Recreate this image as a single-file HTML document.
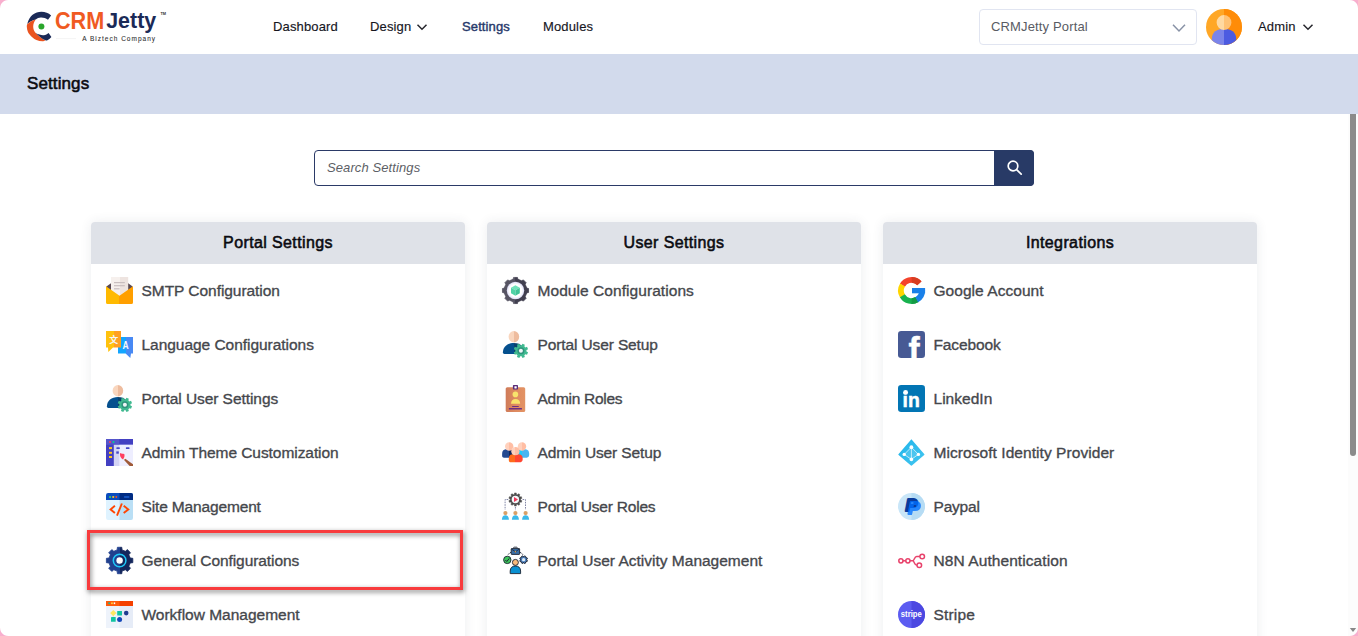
<!DOCTYPE html>
<html lang="en">
<head>
<meta charset="utf-8">
<title>Settings - CRMJetty Portal</title>
<style>
*{box-sizing:border-box;margin:0;padding:0}
html,body{width:1358px;height:636px;overflow:hidden;background:#fff}
body{position:relative;font-family:"Liberation Sans",sans-serif;color:#111;-webkit-font-smoothing:antialiased}
.abs{position:absolute}
/* window corners */
.corner{position:absolute;width:8px;height:8px;z-index:50}
/* header */
#hdr{position:absolute;left:0;top:0;width:1358px;height:54px;background:#fff}
.nav{position:absolute;top:19px;font-size:13px;line-height:16px;color:#16161e;white-space:nowrap;letter-spacing:.15px;-webkit-text-stroke:.15px #16161e}
.nav.act{color:#27396b;-webkit-text-stroke:.4px #27396b;letter-spacing:.12px}
#sel{position:absolute;left:979px;top:9px;width:218px;height:36px;border:1px solid #e1e5f1;border-radius:4px;background:#fff}
#sel span{position:absolute;left:11px;top:9px;font-size:13px;line-height:16px;color:#595b63;letter-spacing:.15px;white-space:nowrap}
#titlebar{position:absolute;left:0;top:54px;width:1358px;height:60px;background:#d2daec}
#titlebar h1{position:absolute;left:27px;top:19.5px;font-size:17px;line-height:20px;font-weight:400;color:#0b0b10;-webkit-text-stroke:.55px #0b0b10;letter-spacing:.1px}
/* search */
#search{position:absolute;left:314px;top:150px;width:720px;height:36px;border:1px solid #2b3a67;border-radius:4px;background:#fff}
#search span{position:absolute;left:12px;top:9px;font-size:13px;line-height:16px;font-style:italic;color:#5d5f66;letter-spacing:.1px}
#sbtn{position:absolute;right:-1px;top:-1px;width:40px;height:36px;background:#283a66;border-radius:0 4px 4px 0}
/* cards */
.card{position:absolute;top:222px;width:374px;height:440px;background:#fff;border-radius:4px;box-shadow:0 0 12px rgba(40,50,80,.09)}
.card h2{position:absolute;left:0;top:0;width:374px;height:42px;background:#dfe2e8;border-radius:4px 4px 0 0;text-align:center;font-size:16px;line-height:41px;font-weight:400;color:#0b0b10;-webkit-text-stroke:.55px #0b0b10;letter-spacing:.38px}
.it{position:absolute;left:50.5px;font-size:15.5px;line-height:20px;color:#45474c;-webkit-text-stroke:.34px #45474c;white-space:nowrap;letter-spacing:.22px}
.ic{position:absolute;left:15px;width:27px;height:27px}
.ic svg{display:block;width:27px;height:27px;overflow:visible}
#hl{position:absolute;left:87px;top:530px;width:376px;height:60px;border:3px solid #f83b3d;filter:drop-shadow(1.2px 2.2px 2.8px rgba(0,0,0,.55));z-index:20}
/* scrollbar */
#track{position:absolute;left:1348px;top:114px;width:10px;height:522px;background:#fcfcfc}
#thumb{position:absolute;left:1350px;top:114px;width:6px;height:342px;background:#8b8b8b;border-radius:0 0 3px 3px}
</style>
</head>
<body>

<div id="hdr">
  <svg class="abs" style="left:0;top:0" width="180" height="54" viewBox="0 0 180 54">
<path d="M27.2,23.9 C28.6,19.4 30.4,16.6 32.6,14.8 C35.2,12.7 38.2,11.8 41.4,11.8 C45.2,11.8 48.6,13.2 51.1,15.4 L48,19.8 C45.8,18.2 43.4,17.5 40.8,17.6 C38.8,17.7 37.2,18.4 35.7,19.5 C32.4,20.4 29.6,21.9 27.2,23.9 Z" fill="#1b2a57"/>
<path d="M35.7,19.5 C32.6,20.4 29.6,22 27.2,24.2 C26.7,25.4 26.8,26.4 26.9,27.4 C27.1,30 28,32.4 29.4,34.3 C31.2,36.8 33.6,38.8 36.4,40 C38.6,40.9 41,41.3 43.3,41.2 C44.2,41.1 45,40.8 45.5,40.3 C43.6,39.6 42.2,38.6 40.75,37.4 C39,36 37.2,34.6 35.7,33 C34,31 33.2,28.9 33.2,26.8 C33.2,24.2 34,21.6 35.7,19.5 Z" fill="#ea5420"/>
<path d="M35.7,33 C37,33.8 38.2,34.3 39.5,34.6 C41,35.1 42.5,35.4 43.9,35.2 C45.6,35 47.2,34.2 48.6,33 L51.4,37.1 C50.2,38.6 48.7,39.8 47,40.5 C46.4,40.7 45.9,40.5 45.5,40.3 C43.8,39.6 42.2,38.6 40.75,37.4 C38.9,36 37.2,34.6 35.7,33 Z" fill="#1b2a57"/>
<circle cx="41.4" cy="26.4" r="3" fill="#2aa62c"/>
<text x="55" y="28.6" font-family="'Liberation Sans',sans-serif" font-weight="700" font-size="23.6" fill="#f05a22" textLength="49.2" lengthAdjust="spacingAndGlyphs">CRM</text>
<text x="106.2" y="28" font-family="'Liberation Sans',sans-serif" font-weight="700" font-size="22.6" fill="#1b2a57" textLength="50" lengthAdjust="spacingAndGlyphs">Jetty</text>
<text x="160.4" y="15.4" font-family="'Liberation Sans',sans-serif" font-weight="700" font-size="3.6" fill="#333" textLength="5.6" lengthAdjust="spacingAndGlyphs">TM</text>
<line x1="56" y1="38.6" x2="76" y2="38.6" stroke="#ececec" stroke-width=".6"/>
<text x="82.2" y="40.6" font-family="'Liberation Sans',sans-serif" font-weight="400" font-size="6.5" fill="#303030" stroke="#303030" stroke-width=".08" textLength="72.8" lengthAdjust="spacing">A Biztech Company</text>
</svg>
  <div class="nav" style="left:273px">Dashboard</div>
  <div class="nav" style="left:370px">Design</div>
  <svg class="abs" style="left:416px;top:23px" width="12" height="8" viewBox="0 0 12 8"><polyline points="1.5,1.8 6,6.2 10.5,1.8" fill="none" stroke="#26262c" stroke-width="1.5"/></svg>
  <div class="nav act" style="left:462px">Settings</div>
  <div class="nav" style="left:543px">Modules</div>
  <div id="sel"><span>CRMJetty Portal</span>
    <svg class="abs" style="left:191px;top:13px" width="16" height="10" viewBox="0 0 16 10"><polyline points="2,1.8 8,8 14,1.8" fill="none" stroke="#8892a6" stroke-width="1.5"/></svg>
  </div>
  <svg class="abs" style="left:1206px;top:9px" width="36" height="36" viewBox="0 0 36 36"><defs><clipPath id="cAv"><circle cx="18" cy="18" r="18"/></clipPath></defs>
<g clip-path="url(#cAv)"><rect width="36" height="36" fill="#ffa726"/><rect x="18" width="18" height="36" fill="#ff8c08"/>
<path d="M5.8,30 C5.8,23 11,19.7 18,19.7 V37 H5.8 Z" fill="#7b84e9"/><path d="M30.2,30 C30.2,23 25,19.7 18,19.7 V37 H30.2 Z" fill="#4c5be1"/>
<path d="M18,6.1 A7.4,7.4 0 0 0 18,20.9 Z" fill="#ffd9a1"/><path d="M18,6.1 A7.4,7.4 0 0 1 18,20.9 Z" fill="#ffc275"/></g></svg>
  <div class="nav" style="left:1258px">Admin</div>
  <svg class="abs" style="left:1302px;top:23px" width="12" height="8" viewBox="0 0 12 8"><polyline points="1.5,1.8 6,6.2 10.5,1.8" fill="none" stroke="#26262c" stroke-width="1.5"/></svg>
</div>

<div id="titlebar"><h1>Settings</h1></div>

<div id="search"><span>Search Settings</span>
  <div id="sbtn">
    <svg class="abs" style="left:12.2px;top:9.3px" width="17" height="17" viewBox="0 0 17 17"><circle cx="7" cy="7" r="4.8" fill="none" stroke="#fff" stroke-width="1.7"/><line x1="10.6" y1="10.6" x2="15.2" y2="15.2" stroke="#fff" stroke-width="1.7" stroke-linecap="round"/></svg>
  </div>
</div>

<div class="card" style="left:91px">
  <h2>Portal Settings</h2>
  <div class="ic" style="top:55px"><svg viewBox="0 0 27 27"><defs><linearGradient id="gS1"><stop offset=".5" stop-color="#ffba00"/><stop offset=".5" stop-color="#ff9f00"/></linearGradient><linearGradient id="gS2"><stop offset=".5" stop-color="#f6f0ed"/><stop offset=".5" stop-color="#eee4e0"/></linearGradient></defs><polygon points="0.4,9.6 5,6.3 22.2,6.3 26.6,9.6 26.6,14 0.4,14" fill="#5b4a52"/><rect x="5" y="0" width="17.2" height="20" fill="url(#gS2)"/><rect x="8" y="5" width="10.8" height="1.2" fill="#c9bebf"/><rect x="8" y="8.1" width="10.8" height="1.2" fill="#c9bebf"/><rect x="8" y="11.2" width="5.6" height="1.2" fill="#c9bebf"/><path d="M0,9.2 L13.5,18.8 L27,9.2 V25.4 Q27,27 25.4,27 H1.6 Q0,27 0,25.4 Z" fill="url(#gS1)"/></svg></div><div class="it" style="top:59px;letter-spacing:-0.049px">SMTP Configuration</div>
  <div class="ic" style="top:109px"><svg viewBox="0 0 27 27"><defs><linearGradient id="gL1" gradientUnits="userSpaceOnUse" x1="0" x2="15"><stop offset=".52" stop-color="#ffc20d"/><stop offset=".52" stop-color="#ff9f22"/></linearGradient><linearGradient id="gL2" gradientUnits="userSpaceOnUse" x1="12" x2="27"><stop offset=".5" stop-color="#12a5ff"/><stop offset=".5" stop-color="#4889f4"/></linearGradient></defs><path d="M12,6 H27 V22.6 H25 L24.3,27 L19.6,22.6 H12 Z" fill="url(#gL2)"/><path d="M0,0 H15 V16.6 H7 L2.3,21 L2,16.6 H0 Z" fill="url(#gL1)"/><text x="7.8" y="12.3" font-family="'Liberation Sans','Noto Sans CJK SC',sans-serif" font-size="9" font-weight="700" text-anchor="middle" fill="#f3f6fb">文</text><text x="0" y="17.9" font-family="'Liberation Sans',sans-serif" font-size="10.7" font-weight="700" text-anchor="middle" fill="#f3f6fb" transform="translate(19.7 0) scale(.8 1)">A</text></svg></div><div class="it" style="top:113px;letter-spacing:-0.036px">Language Configurations</div>
  <div class="ic" style="top:163px"><svg viewBox="0 0 27 27"><defs><linearGradient id="gP1a" gradientUnits="userSpaceOnUse" x1="6.6" x2="17.2"><stop offset=".5" stop-color="#f9d6be"/><stop offset=".5" stop-color="#eebc9e"/></linearGradient><linearGradient id="gP2a" gradientUnits="userSpaceOnUse" x1="0" x2="23.8"><stop offset=".5" stop-color="#05508e"/><stop offset=".5" stop-color="#0a416d"/></linearGradient></defs><ellipse cx="11.9" cy="5.7" rx="5.3" ry="5.7" fill="url(#gP1a)"/><path d="M0.9,21.6 C0.9,15.6 5.6,12 11.9,12 C15.6,12 18.6,13.2 20.4,15.4 V23 H2.3 Q0.9,23 0.9,21.6 Z" fill="url(#gP2a)"/><path d="M24.45,20.55 L26.04,21.34 L25.03,23.76 L23.35,23.20 L22.30,24.25 L22.86,25.93 L20.44,26.94 L19.65,25.35 L18.15,25.35 L17.36,26.94 L14.94,25.93 L15.50,24.25 L14.45,23.20 L12.77,23.76 L11.76,21.34 L13.35,20.55 L13.35,19.05 L11.76,18.26 L12.77,15.84 L14.45,16.40 L15.50,15.35 L14.94,13.67 L17.36,12.66 L18.15,14.25 L19.65,14.25 L20.44,12.66 L22.86,13.67 L22.30,15.35 L23.35,16.40 L25.03,15.84 L26.04,18.26 L24.45,19.05Z" fill="#40b990"/><circle cx="18.9" cy="19.8" r="3.5" fill="#2f937c"/><circle cx="18.9" cy="19.8" r="2" fill="#eef4f6"/></svg></div><div class="it" style="top:167px;letter-spacing:-0.059px">Portal User Settings</div>
  <div class="ic" style="top:217px"><svg viewBox="0 0 27 27"><rect x="0" y="0" width="27" height="27" fill="#4340c2"/><rect x="0" y="0" width="13.3" height="5.8" fill="#5555ca"/><rect x="7.8" y="5.8" width="19.2" height="21.2" fill="#d4d4f4"/><rect x="13.3" y="5.8" width="13.7" height="21.2" fill="#eeeeff"/><circle cx="4" cy="3" r="1" fill="#ff3c5e"/><circle cx="7.5" cy="3" r="1" fill="#00d890"/><rect x="3" y="8.1" width="3" height="2" fill="#ffc81e"/><rect x="3" y="12.8" width="3" height="2" fill="#ffc81e"/><rect x="3" y="17" width="3" height="2" fill="#ffc81e"/><rect x="10.4" y="8.3" width="3.4" height="1.6" rx=".5" fill="#4848c6"/><rect x="19.9" y="8.3" width="3.6" height="1.6" rx=".5" fill="#4848c6"/><rect x="10.3" y="12.4" width="2.5" height="2.3" fill="#4848c6"/><path d="M18.6,19.2 L27,25.2 V27 H23.6 L17.6,20.6 Z" fill="#9f5a38"/><path d="M14.1,14 C15.8,15.2 17.2,14.4 18.4,15.2 C19.2,17 18.6,18.8 17,20.5 C14.6,19 13.5,16.6 14.1,14 Z" fill="#ff3f62"/><path d="M18.4,15.2 L20.4,18.6 L18.2,20.8 L17,20.4 C18.6,18.8 19.2,17 18.4,15.2Z" fill="#f6f2f2"/></svg></div><div class="it" style="top:221px;letter-spacing:-0.064px">Admin Theme Customization</div>
  <div class="ic" style="top:271px"><svg viewBox="0 0 27 27"><defs><clipPath id="cSi"><rect width="27" height="27" rx="2.2"/></clipPath></defs><g clip-path="url(#cSi)"><rect width="27" height="27" fill="#dff3ff"/><rect x="13.5" width="13.5" height="27" fill="#badff5"/><rect width="27" height="7" fill="#0a4cbe"/><rect x="13.5" width="13.5" height="7" fill="#002b82"/></g><rect x="3.1" y="3" width="1.9" height="2" rx=".4" fill="#3ec860"/><rect x="6.3" y="3" width="1.9" height="2" rx=".4" fill="#e9b72f"/><rect x="9.5" y="3" width="1.6" height="2" rx=".4" fill="#ea5129"/><rect x="17.8" y="3.2" width="5.7" height="1.6" rx=".8" fill="#1b60d2"/><g fill="none" stroke="#ff4603" stroke-width="1.9"><polyline points="8.9,12.8 4.6,16.4 8.9,20"/><polyline points="17.7,12.8 22.3,16.4 17.7,20"/><line x1="15.9" y1="10.5" x2="11" y2="22.6"/></g></svg></div><div class="it" style="top:275px;letter-spacing:-0.147px">Site Management</div>
  <div class="ic" style="top:325px"><svg viewBox="0 0 27 27"><defs><linearGradient id="gG1" gradientUnits="userSpaceOnUse" x1="0" x2="27.2"><stop offset=".5" stop-color="#21408e"/><stop offset=".5" stop-color="#14275c"/></linearGradient></defs><path d="M16.06,24.12 L15.80,26.72 L11.40,26.72 L11.14,24.12 L7.83,22.75 L5.81,24.40 L2.70,21.29 L4.35,19.27 L2.98,15.96 L0.38,15.70 L0.38,11.30 L2.98,11.04 L4.35,7.73 L2.70,5.71 L5.81,2.60 L7.83,4.25 L11.14,2.88 L11.40,0.28 L15.80,0.28 L16.06,2.88 L19.37,4.25 L21.39,2.60 L24.50,5.71 L22.85,7.73 L24.22,11.04 L26.82,11.30 L26.82,15.70 L24.22,15.96 L22.85,19.27 L24.50,21.29 L21.39,24.40 L19.37,22.75Z" fill="url(#gG1)" stroke="url(#gG1)" stroke-width=".8" stroke-linejoin="round"/><circle cx="13.6" cy="13.5" r="6.3" fill="none" stroke="#1ec9f9" stroke-width="1.5"/><circle cx="13.6" cy="13.5" r="3.2" fill="#fff"/></svg></div><div class="it" style="top:329px;letter-spacing:-0.078px">General Configurations</div>
  <div class="ic" style="top:379px"><svg viewBox="0 0 27 27"><rect width="27" height="27" fill="#eef3fb"/><rect x="13.5" width="13.5" height="27" fill="#e6ecf7"/><rect width="27" height="5" fill="#ff5b0c"/><rect x="13.5" width="13.5" height="5" fill="#f44000"/><rect x="2.3" y="1.4" width="1.7" height="1.7" fill="#1ab495"/><rect x="5.1" y="1.4" width="1.7" height="1.7" fill="#ffd53d"/><rect x="7.7" y="1.4" width="1.5" height="1.7" fill="#fff"/><g stroke="#d9dbe6" stroke-width=".6"><line x1="7.3" y1="12.1" x2="20" y2="12.1"/><line x1="7.3" y1="12.1" x2="7.3" y2="18"/><line x1="7.3" y1="18.4" x2="13.6" y2="18.4"/></g><polygon points="7.3,8.9 10.5,12.1 7.3,15.3 4.1,12.1" fill="#ffe863"/><rect x="11.2" y="10" width="4.8" height="4.4" rx=".3" fill="#12c4a1"/><circle cx="20.2" cy="12.1" r="2.3" fill="#1e3b90"/><rect x="5" y="16.1" width="4.7" height="4.6" rx=".3" fill="#12c4a1"/><circle cx="13.6" cy="18.4" r="2.5" fill="#1247b9"/></svg></div><div class="it" style="top:383px;letter-spacing:-0.006px">Workflow Management</div>
</div>

<div class="card" style="left:487px">
  <h2>User Settings</h2>
  <div class="ic" style="top:55px"><svg viewBox="0 0 27 27"><defs><linearGradient id="gM1" gradientUnits="userSpaceOnUse" x1="0" x2="27"><stop offset=".5" stop-color="#565463"/><stop offset=".5" stop-color="#413f4f"/></linearGradient><radialGradient id="gM2"><stop offset=".72" stop-color="#fff"/><stop offset="1" stop-color="#dcdcf6"/></radialGradient></defs><path d="M15.92,24.74 L15.46,26.55 L11.54,26.55 L11.08,24.74 L7.26,23.16 L5.66,24.12 L2.88,21.34 L3.84,19.74 L2.26,15.92 L0.45,15.46 L0.45,11.54 L2.26,11.08 L3.84,7.26 L2.88,5.66 L5.66,2.88 L7.26,3.84 L11.08,2.26 L11.54,0.45 L15.46,0.45 L15.92,2.26 L19.74,3.84 L21.34,2.88 L24.12,5.66 L23.16,7.26 L24.74,11.08 L26.55,11.54 L26.55,15.46 L24.74,15.92 L23.16,19.74 L24.12,21.34 L21.34,24.12 L19.74,23.16Z" fill="url(#gM1)" stroke="url(#gM1)" stroke-width=".8" stroke-linejoin="round"/><circle cx="13.5" cy="13.5" r="8.7" fill="url(#gM2)"/><polygon points="13.4,8.2 17.8,10.7 13.4,13.3 9,10.7" fill="#6fe2ba"/><polygon points="9,10.7 13.4,13.3 13.4,18.8 9,16.3" fill="#4fd2a6"/><polygon points="17.8,10.7 13.4,13.3 13.4,18.8 17.8,16.3" fill="#3fc498"/></svg></div><div class="it" style="top:59px;letter-spacing:0.064px">Module Configurations</div>
  <div class="ic" style="top:109px"><svg viewBox="0 0 27 27"><defs><linearGradient id="gP1b" gradientUnits="userSpaceOnUse" x1="6.6" x2="17.2"><stop offset=".5" stop-color="#f9d6be"/><stop offset=".5" stop-color="#eebc9e"/></linearGradient><linearGradient id="gP2b" gradientUnits="userSpaceOnUse" x1="0" x2="23.8"><stop offset=".5" stop-color="#05508e"/><stop offset=".5" stop-color="#0a416d"/></linearGradient></defs><ellipse cx="11.9" cy="5.7" rx="5.3" ry="5.7" fill="url(#gP1b)"/><path d="M0.9,21.6 C0.9,15.6 5.6,12 11.9,12 C15.6,12 18.6,13.2 20.4,15.4 V23 H2.3 Q0.9,23 0.9,21.6 Z" fill="url(#gP2b)"/><path d="M24.45,20.55 L26.04,21.34 L25.03,23.76 L23.35,23.20 L22.30,24.25 L22.86,25.93 L20.44,26.94 L19.65,25.35 L18.15,25.35 L17.36,26.94 L14.94,25.93 L15.50,24.25 L14.45,23.20 L12.77,23.76 L11.76,21.34 L13.35,20.55 L13.35,19.05 L11.76,18.26 L12.77,15.84 L14.45,16.40 L15.50,15.35 L14.94,13.67 L17.36,12.66 L18.15,14.25 L19.65,14.25 L20.44,12.66 L22.86,13.67 L22.30,15.35 L23.35,16.40 L25.03,15.84 L26.04,18.26 L24.45,19.05Z" fill="#40b990"/><circle cx="18.9" cy="19.8" r="3.5" fill="#2f937c"/><circle cx="18.9" cy="19.8" r="2" fill="#eef4f6"/></svg></div><div class="it" style="top:113px;letter-spacing:-0.120px">Portal User Setup</div>
  <div class="ic" style="top:163px"><svg viewBox="0 0 27 27"><defs><linearGradient id="gR1" gradientUnits="userSpaceOnUse" x1="3.7" x2="23.2"><stop offset="0" stop-color="#cf7b59"/><stop offset=".5" stop-color="#de8a60"/><stop offset="1" stop-color="#e39364"/></linearGradient></defs><rect x="3.7" y="2.2" width="19.5" height="24.8" rx="1.6" fill="url(#gR1)"/><rect x="10.9" y="0" width="5.1" height="4.4" rx=".7" fill="#5a2d79"/><rect x="12.4" y="1.2" width="2.3" height="2.2" rx=".4" fill="#fff"/><circle cx="13.4" cy="9.4" r="2.8" fill="#f8e36c"/><path d="M9,18.8 C9,15.8 10.9,14 13.5,14 C16.2,14 18.2,15.8 18.2,18.8 Z" fill="#f8e36c"/><rect x="10" y="20.9" width="6.9" height="1" rx=".5" fill="#6a2f82"/><rect x="6.8" y="22.9" width="13.2" height="1.7" rx=".5" fill="#6a2f82"/></svg></div><div class="it" style="top:167px;letter-spacing:-0.275px">Admin Roles</div>
  <div class="ic" style="top:217px"><svg viewBox="0 0 27 27"><defs><linearGradient id="hu1" gradientUnits="userSpaceOnUse" x1="3.00" x2="11.40"><stop offset=".5" stop-color="#ffd1bd"/><stop offset=".5" stop-color="#ffbea4"/></linearGradient><linearGradient id="bu1" gradientUnits="userSpaceOnUse" x1="0.10" x2="12.60"><stop offset="0.568" stop-color="#24498f"/><stop offset="0.568" stop-color="#12275b"/></linearGradient></defs><path d="M0.10,15.53 C0.10,10.20 2.35,10.20 7.20,10.20 C10.35,10.20 12.60,10.20 12.60,15.53 C12.60,18.80 9.85,18.80 9.85,18.80 H2.85 C0.10,18.80 0.10,17.94 0.10,15.53 Z" fill="url(#bu1)"/><circle cx="7.20" cy="7.50" r="4.20" fill="url(#hu1)"/><defs><linearGradient id="hu2" gradientUnits="userSpaceOnUse" x1="15.80" x2="24.20"><stop offset=".5" stop-color="#ffd1bd"/><stop offset=".5" stop-color="#ffbea4"/></linearGradient><linearGradient id="bu2" gradientUnits="userSpaceOnUse" x1="14.60" x2="27.20"><stop offset="0.429" stop-color="#1cc9f9"/><stop offset="0.429" stop-color="#49b5f1"/></linearGradient></defs><path d="M14.60,15.53 C14.60,10.20 16.87,10.20 20.00,10.20 C24.93,10.20 27.20,10.20 27.20,15.53 C27.20,18.80 24.43,18.80 24.43,18.80 H17.37 C14.60,18.80 14.60,17.94 14.60,15.53 Z" fill="url(#bu2)"/><circle cx="20.00" cy="7.50" r="4.20" fill="url(#hu2)"/><defs><linearGradient id="hu3" gradientUnits="userSpaceOnUse" x1="9.30" x2="17.50"><stop offset=".5" stop-color="#ffd1bd"/><stop offset=".5" stop-color="#ffbea4"/></linearGradient><linearGradient id="bu3" gradientUnits="userSpaceOnUse" x1="6.80" x2="20.70"><stop offset="0.475" stop-color="#ff6b1b"/><stop offset="0.475" stop-color="#ff4631"/></linearGradient></defs><path d="M6.80,20.16 C6.80,15.20 9.30,15.20 13.40,15.20 C18.20,15.20 20.70,15.20 20.70,20.16 C20.70,23.20 17.64,23.20 17.64,23.20 H9.86 C6.80,23.20 6.80,22.40 6.80,20.16 Z" fill="url(#bu3)"/><circle cx="13.40" cy="12.20" r="4.10" fill="url(#hu3)"/></svg></div><div class="it" style="top:221px;letter-spacing:-0.134px">Admin User Setup</div>
  <div class="ic" style="top:271px"><svg viewBox="0 0 27 27"><path d="M14.41,11.60 L14.27,13.04 L12.53,13.04 L12.39,11.60 L11.22,11.22 L10.26,12.30 L8.85,11.28 L9.59,10.04 L8.86,9.03 L7.45,9.35 L6.91,7.70 L8.24,7.12 L8.24,5.88 L6.91,5.30 L7.45,3.65 L8.86,3.97 L9.59,2.96 L8.85,1.72 L10.26,0.70 L11.22,1.78 L12.39,1.40 L12.53,-0.04 L14.27,-0.04 L14.41,1.40 L15.58,1.78 L16.54,0.70 L17.95,1.72 L17.21,2.96 L17.94,3.97 L19.35,3.65 L19.89,5.30 L18.56,5.88 L18.56,7.12 L19.89,7.70 L19.35,9.35 L17.94,9.03 L17.21,10.04 L17.95,11.28 L16.54,12.30 L15.58,11.22Z" fill="#4b4b4b" stroke="#4b4b4b" stroke-width=".5" stroke-linejoin="round"/><circle cx="13.4" cy="6.5" r="3.7" fill="#f3f6f8"/><polygon points="12,4 16,6.5 12,9" fill="#f1385b"/><g fill="none" stroke="#3a4172" stroke-width=".9" stroke-dasharray="1.6 1" opacity=".7"><polyline points="6.2,6.5 3.1,6.5 3.1,16.8"/><polyline points="20.6,6.5 23.5,6.5 23.5,16.8"/><line x1="13.4" y1="14" x2="13.4" y2="17.2"/></g><circle cx="3.4" cy="20.1" r="2.1" fill="#d9a067"/><path d="M-0.1,26.8 C-0.1,23.4 1.4,22.2 3.4,22.2 C5.4,22.2 6.9,23.4 6.9,26.8Z" fill="#3cb9e9"/><circle cx="13.4" cy="20.1" r="2.1" fill="#d9a067"/><path d="M9.9,26.8 C9.9,23.4 11.4,22.2 13.4,22.2 C15.4,22.2 16.9,23.4 16.9,26.8Z" fill="#3cb9e9"/><circle cx="23.6" cy="20.1" r="2.1" fill="#d9a067"/><path d="M20.1,26.8 C20.1,23.4 21.6,22.2 23.6,22.2 C25.6,22.2 27.1,23.4 27.1,26.8Z" fill="#3cb9e9"/></svg></div><div class="it" style="top:275px;letter-spacing:-0.211px">Portal User Roles</div>
  <div class="ic" style="top:325px"><svg viewBox="0 0 27 27"><g fill="none" stroke="#1c2433" stroke-width=".9"><path d="M6.2,7.6 C7,6.4 8,5.6 9,5.2" stroke-dasharray="1.6 .8"/><path d="M17.8,5.2 C19.2,5.8 20.4,6.8 21,7.8" stroke-dasharray="1.6 .8"/><path d="M11.6,1.4 V.7 Q11.6,.2 12.2,.2 H14.6 Q15.2,.2 15.2,.7 V1.4"/></g><rect x="9.2" y="1.6" width="8.4" height="5.8" rx=".5" fill="#3b6fa6" stroke="#1c2433" stroke-width=".9"/><path d="M9.4,2 L13.4,4.8 L17.4,2" fill="none" stroke="#1c2433" stroke-width=".8"/><circle cx="13.4" cy="4.8" r=".7" fill="#f0a040"/><circle cx="5.3" cy="12.9" r="3.7" fill="#3dc55b" stroke="#1c2433" stroke-width=".9"/><polyline points="3.4,13 4.8,14.5 7.3,11.4" fill="none" stroke="#1c2433" stroke-width="1"/><path d="M24.57,13.11 L25.41,13.54 L24.88,14.80 L23.99,14.51 L23.41,15.09 L23.70,15.98 L22.44,16.51 L22.01,15.67 L21.19,15.67 L20.76,16.51 L19.50,15.98 L19.79,15.09 L19.21,14.51 L18.32,14.80 L17.79,13.54 L18.63,13.11 L18.63,12.29 L17.79,11.86 L18.32,10.60 L19.21,10.89 L19.79,10.31 L19.50,9.42 L20.76,8.89 L21.19,9.73 L22.01,9.73 L22.44,8.89 L23.70,9.42 L23.41,10.31 L23.99,10.89 L24.88,10.60 L25.41,11.86 L24.57,12.29Z" fill="#4a80c1" stroke="#1c2433" stroke-width="1" stroke-linejoin="round"/><circle cx="21.6" cy="12.7" r="1.6" fill="#dfeefa"/><circle cx="13.4" cy="15.4" r="3" fill="#f8b97b" stroke="#1c2433" stroke-width=".9"/><path d="M8.2,26.6 V24 C8.2,20.6 10.4,19 13.4,19 C16.4,19 18.6,20.6 18.6,24 V26.6 Z" fill="#0a90d1" stroke="#1c2433" stroke-width=".9" stroke-linejoin="round"/></svg></div><div class="it" style="top:329px;letter-spacing:-0.001px">Portal User Activity Management</div>
</div>

<div class="card" style="left:883px">
  <h2>Integrations</h2>
  <div class="ic" style="top:55px"><svg viewBox="0 0 27 27"><circle cx="13.6" cy="13.5" r="10.60" fill="none" stroke="#f4432c" stroke-width="5.8" stroke-dasharray="19.796 46.806" transform="rotate(-150.00 13.6 13.5)"/><circle cx="13.6" cy="13.5" r="10.60" fill="none" stroke="#d73d22" stroke-width="5.8" stroke-dasharray="8.603 57.999" transform="rotate(-89.50 13.6 13.5)"/><circle cx="13.6" cy="13.5" r="10.60" fill="none" stroke="#ffd500" stroke-width="5.8" stroke-dasharray="11.655 54.946" transform="rotate(148.00 13.6 13.5)"/><circle cx="13.6" cy="13.5" r="10.60" fill="none" stroke="#18b24f" stroke-width="5.8" stroke-dasharray="16.835 49.766" transform="rotate(59.00 13.6 13.5)"/><circle cx="13.6" cy="13.5" r="10.60" fill="none" stroke="#159a45" stroke-width="5.8" stroke-dasharray="5.643 60.959" transform="rotate(59.00 13.6 13.5)"/><circle cx="13.6" cy="13.5" r="10.60" fill="none" stroke="#1a80e9" stroke-width="5.8" stroke-dasharray="11.378 55.224" transform="rotate(-1.00 13.6 13.5)"/><rect x="14" y="11" width="13.1" height="5.3" fill="#1a80e9"/></svg></div><div class="it" style="top:59px;letter-spacing:0.046px">Google Account</div>
  <div class="ic" style="top:109px"><svg viewBox="0 0 27 27"><defs><clipPath id="cFb"><rect width="27" height="27" rx="3.2"/></clipPath></defs><rect width="27" height="27" rx="3.2" fill="#475a94"/><g clip-path="url(#cFb)"><text x="10.3" y="27" font-family="'Liberation Sans',sans-serif" font-weight="700" font-size="36" fill="#fff" stroke="#fff" stroke-width=".5" transform="translate(10.5 4.1) scale(.93 1) translate(-10.3 0)">f</text></g></svg></div><div class="it" style="top:113px;letter-spacing:-0.107px">Facebook</div>
  <div class="ic" style="top:163px"><svg viewBox="0 0 27 27"><rect width="27" height="27" rx="3.2" fill="#0275b4"/><text x="4.6" y="21.7" font-family="'Liberation Sans',sans-serif" font-weight="700" font-size="20.4" fill="#fff" stroke="#fff" stroke-width=".5" textLength="17.2" lengthAdjust="spacingAndGlyphs">in</text><circle cx="7.6" cy="7.4" r="2.45" fill="#fff"/></svg></div><div class="it" style="top:167px;letter-spacing:0.023px">LinkedIn</div>
  <div class="ic" style="top:217px"><svg viewBox="0 0 27 27"><defs><linearGradient id="gMs" x1="0" y1="0" x2="1" y2="1"><stop offset="0" stop-color="#1fb4ea"/><stop offset="1" stop-color="#45c6f0"/></linearGradient></defs><path d="M13.4,0.2 L26.4,15.2 Q26.6,15.7 26.2,16 L13.9,26.6 Q13.4,26.9 12.9,26.6 L0.6,16 Q0.2,15.7 0.4,15.2 Z" fill="url(#gMs)"/><g stroke="#d8f2fc" stroke-width=".9" fill="none" opacity=".9"><line x1="13.4" y1="8.2" x2="6.2" y2="15.4"/><line x1="13.4" y1="8.2" x2="20.4" y2="15.4"/><line x1="6.2" y1="15.4" x2="13.4" y2="20.4"/><line x1="20.4" y1="15.4" x2="13.4" y2="20.4"/><line x1="13.4" y1="8.2" x2="13.4" y2="20.4"/></g><polygon points="13.4,8.2 6.2,15.4 13.4,20.4 20.4,15.4" fill="#fff" opacity=".12"/><circle cx="13.4" cy="8.2" r="1.9" fill="#fff"/><circle cx="6.2" cy="15.4" r="1.7" fill="#fff"/><circle cx="20.4" cy="15.4" r="1.7" fill="#fff"/><circle cx="13.4" cy="20.4" r="1.8" fill="#fff"/></svg></div><div class="it" style="top:221px;letter-spacing:0.061px">Microsoft Identity Provider</div>
  <div class="ic" style="top:271px"><svg viewBox="0 0 27 27"><defs><clipPath id="cPp"><circle cx="13.5" cy="13.5" r="13.5"/></clipPath></defs><g clip-path="url(#cPp)"><rect width="27" height="27" fill="#c9e6f8"/><rect x="13.5" width="13.5" height="27" fill="#b6dcf4"/></g><text x="7.4" y="17.6" font-family="'Liberation Sans',sans-serif" font-weight="700" font-style="italic" font-size="17.4" fill="#0a3b9b" stroke="#0a3b9b" stroke-width="2.2" stroke-linejoin="round">P</text><g opacity=".78"><text x="10.2" y="20.8" font-family="'Liberation Sans',sans-serif" font-weight="700" font-style="italic" font-size="17.4" fill="#0070ff" stroke="#0070ff" stroke-width="2.2" stroke-linejoin="round">P</text></g></svg></div><div class="it" style="top:275px;letter-spacing:-0.204px">Paypal</div>
  <div class="ic" style="top:325px"><svg viewBox="0 0 27 27"><g fill="none" stroke="#e8426b" stroke-width="1.5"><circle cx="2.9" cy="13.8" r="2.1"/><circle cx="9.9" cy="13.8" r="2.1"/><line x1="5" y1="13.8" x2="7.8" y2="13.8"/><path d="M12,13.8 H15 M21.9,9.5 H18.6 C16.2,9.5 16.6,13.8 14.6,13.8 C16.6,13.8 16,18.2 18.9,18.2"/><circle cx="24.2" cy="9.5" r="2.3"/><circle cx="21.3" cy="18.2" r="2.3"/></g></svg></div><div class="it" style="top:329px;letter-spacing:0.077px">N8N Authentication</div>
  <div class="ic" style="top:379px"><svg viewBox="0 0 27 27"><defs><clipPath id="cSt"><circle cx="13.5" cy="13.5" r="13.5"/></clipPath></defs><g clip-path="url(#cSt)"><rect width="27" height="27" fill="#5c5cf1"/><rect x="13.5" width="13.5" height="27" fill="#4c48e1"/></g><text x="2.8" y="15.8" font-family="'Liberation Sans',sans-serif" font-weight="700" font-size="8.6" fill="#fff" textLength="21" lengthAdjust="spacingAndGlyphs">stripe</text></svg></div><div class="it" style="top:383px;letter-spacing:0.185px">Stripe</div>
</div>

<div id="hl"></div>

<div id="track"></div>
<div id="thumb"></div>
<svg class="abs" style="left:1349px;top:627px;z-index:40" width="8" height="6" viewBox="0 0 8 6"><polygon points="0.8,1 7.2,1 4,5" fill="#888"/></svg>

<div class="corner" style="left:0;top:0;background:radial-gradient(circle at 100% 100%,rgba(248,175,206,0) 7.4px,#f8afce 8.4px)"></div>
<div class="corner" style="right:0;top:0;background:radial-gradient(circle at 0 100%,rgba(248,175,206,0) 7.4px,#f8afce 8.4px)"></div>
<div class="corner" style="left:0;bottom:0;background:radial-gradient(circle at 100% 0,rgba(248,175,206,0) 7.4px,#f8afce 8.4px)"></div>
<div class="corner" style="right:0;bottom:0;background:radial-gradient(circle at 0 0,rgba(248,175,206,0) 7.4px,#f8afce 8.4px)"></div>

</body>
</html>
